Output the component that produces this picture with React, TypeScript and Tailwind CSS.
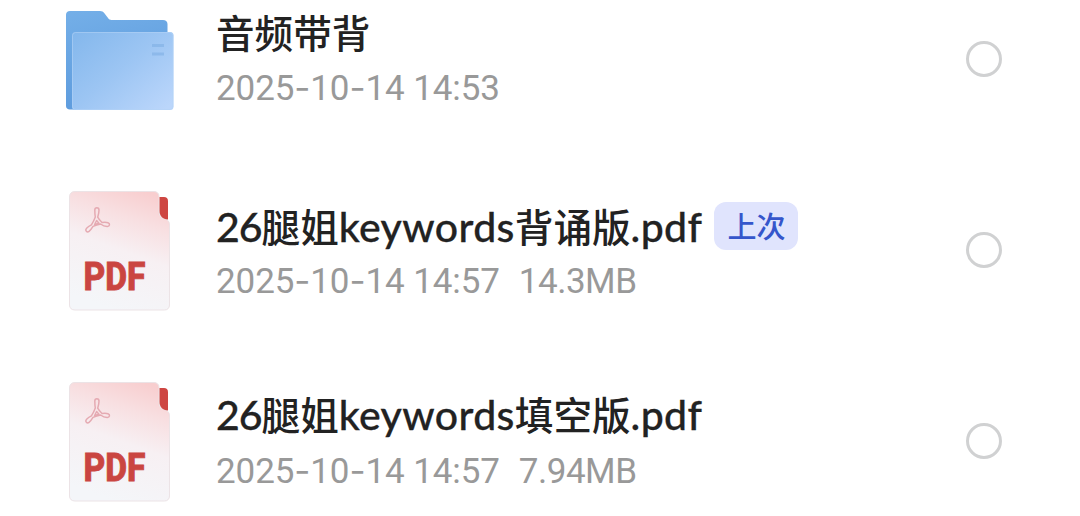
import { Fragment } from 'react';

interface FileItem {
  kind: 'folder' | 'pdf';
  name: string;
  date: string;
  size?: string;
  isLast?: boolean;
  titleClass: string;
  metaClass: string;
}

const FILES: FileItem[] = [
  {
    kind: 'folder',
    name: '音频带背',
    date: '2025-10-14 14:53',
    titleClass: 'mt-[7px]',
    metaClass: 'mt-[12px]',
  },
  {
    kind: 'pdf',
    name: '26腿姐keywords背诵版.pdf',
    date: '2025-10-14 14:57',
    size: '14.3MB',
    isLast: true,
    titleClass: 'mt-[11px]',
    metaClass: 'mt-[10px]',
  },
  {
    kind: 'pdf',
    name: '26腿姐keywords填空版.pdf',
    date: '2025-10-14 14:57',
    size: '7.94MB',
    titleClass: 'mt-[8px]',
    metaClass: 'mt-[12px]',
  },
];

function FolderIcon() {
  return (
    <svg width="112" height="112" viewBox="0 0 112 112" className="mt-[3px] block">
      <defs>
        <linearGradient id="folder-back" x1="0" y1="0" x2="0.3" y2="1">
          <stop offset="0" stopColor="#74afe8" />
          <stop offset="1" stopColor="#5d9bdd" />
        </linearGradient>
        <linearGradient id="folder-front" x1="0" y1="0" x2="1" y2="0.9">
          <stop offset="0" stopColor="#83b7ec" />
          <stop offset="0.5" stopColor="#9cc5f3" />
          <stop offset="1" stopColor="#bbd6fb" />
        </linearGradient>
      </defs>
      <path
        d="M5 8h30c2 0 3.200.8 4.400 2.300l4 5.200c.8 1 1.600 1.400 3 1.400H98c2.500 0 4.500 1.500 4.500 4V106.500H5c-2.500 0-4-1.200-4-3.500V12c0-2.500 1.500-4 4-4z"
        fill="url(#folder-back)"
      />
      <rect x="7" y="29" width="101.500" height="78" rx="3.500" fill="url(#folder-front)" />
      <rect x="7.500" y="29.500" width="100.500" height="77" rx="3" fill="none" stroke="#b4d3f6" strokeOpacity=".55" />
      <path d="M87 42.500h12M87 51h12" stroke="#80b0e5" strokeWidth="3" opacity=".6" />
    </svg>
  );
}

function PdfIcon() {
  return (
    <svg width="104" height="120" viewBox="0 0 104 120" className="ml-[4px] block">
      <defs>
        <linearGradient id="pdf-page" x1="0.75" y1="0" x2="0.45" y2="1">
          <stop offset="0" stopColor="#f8cecf" />
          <stop offset="0.24" stopColor="#f8dfe1" />
          <stop offset="0.52" stopColor="#f7f0f3" />
          <stop offset="1" stopColor="#f4f6f9" />
        </linearGradient>
      </defs>
      <path
        d="M6 .5h79c3 0 5 2 5 5V21c0 3.500 2 5.500 5 6.500 3.500 1 5.500 2.500 5.500 6.500v80c0 3-2 5-5 5H6c-3.500 0-5.500-2-5.500-5V6C.5 2.500 2.500.5 6 .5z"
        fill="url(#pdf-page)"
        stroke="#ece3e6"
        strokeWidth="1"
      />
      <path d="M90.500 6H95c2.500 0 4 1.500 4 4v18.500c-5.500-.5-8.500-3.500-8.500-8.500z" fill="#ce4642" />
      <path
        d="M25.800 19c0-3 4.200-3 4.200 0 0 2.500-.6 5-1.300 7.200 1.100 2 2.600 3.800 4.300 5.300 2.200-.4 4.300-.4 6 .2 2.400.8 1.800 3.900-.8 3.800-2.300-.1-4.600-1-6.600-2.500-2.700.5-5.200 1.300-7.600 2.400-1.200 2-2.500 3.800-4 5-2 1.500-4.300-1-2.600-2.900 1.300-1.400 3-2.600 5-3.600 1.500-2.500 2.900-5.200 3.900-8-.4-2.300-.5-4.600-.5-6.900zM27.600 29.500l-2 4 4.300-1.200z"
        fill="none"
        stroke="#e5aab2"
        strokeWidth="1.500"
        strokeLinejoin="round"
      />
      <text
        x="14.500"
        y="99"
        textLength="62"
        lengthAdjust="spacingAndGlyphs"
        className="font-['Roboto'] text-[38px] font-extrabold"
        fill="#ca4541"
        stroke="#ca4541"
        strokeWidth=".8"
      >
        PDF
      </text>
    </svg>
  );
}

// Latin runs sit slightly larger than the Han characters beside them
function FileName({ name }: { name: string }) {
  return (
    <span className="font-['Noto_Sans_CJK_SC',sans-serif] text-[38.6px] leading-[48px] font-medium text-[#222]">
      {name.split(/(\d+|[a-z.]+)/).map((run, i) => {
        if (/^\d/.test(run)) {
          return (
            <span key={i} className="font-['Lato',sans-serif] text-[41px] tracking-[-1px] [-webkit-text-stroke:0.3px_#222]">
              {run}
            </span>
          );
        }
        if (/^[a-z.]/.test(run)) {
          return (
            <span key={i} className="font-['Lato',sans-serif] text-[41px] tracking-[0.4px] [-webkit-text-stroke:0.3px_#222]">
              {run}
            </span>
          );
        }
        return run;
      })}
    </span>
  );
}

function Meta({ text }: { text: string }) {
  return (
    <span>
      {text.split('-').map((part, i) => (
        <Fragment key={i}>
          {i > 0 && <span className="font-['Inter',sans-serif] font-normal">-</span>}
          {part}
        </Fragment>
      ))}
    </span>
  );
}

function FileRow({ file }: { file: FileItem }) {
  return (
    <div className="flex h-[118px] items-start">
      <div className="w-[151px] shrink-0">
        {file.kind === 'folder' ? <FolderIcon /> : <PdfIcon />}
      </div>

      {/* Name + details */}
      <div className="min-w-0 flex-1 whitespace-nowrap">
        <div className={`flex h-12 items-center ${file.titleClass}`}>
          <FileName name={file.name} />
          {file.isLast && (
            <span className="ml-3 flex h-12 w-[84px] items-center justify-center rounded-[12px] bg-[#e0e4fd] font-['Noto_Sans_CJK_SC',sans-serif] text-[29px] font-medium text-[#3556cb]">
              上次
            </span>
          )}
        </div>
        <div
          className={`flex h-10 items-baseline gap-[19px] font-['Roboto',sans-serif] text-[35px] leading-10 font-[450] tracking-[-0.1px] text-[#999] ${file.metaClass}`}
        >
          <Meta text={file.date} />
          {file.size && <span className="tracking-[-0.5px]">{file.size}</span>}
        </div>
      </div>

      {/* Select circle */}
      <div className="mr-[78px] h-9 w-9 shrink-0 self-center rounded-full border-[3px] border-[#d0d1d2]" />
    </div>
  );
}

export default function App() {
  return (
    <div className="flex h-[516px] w-[1080px] flex-col gap-[73px] overflow-hidden bg-white pl-[65px]">
      {FILES.map((file) => (
        <FileRow key={file.name} file={file} />
      ))}
    </div>
  );
}
